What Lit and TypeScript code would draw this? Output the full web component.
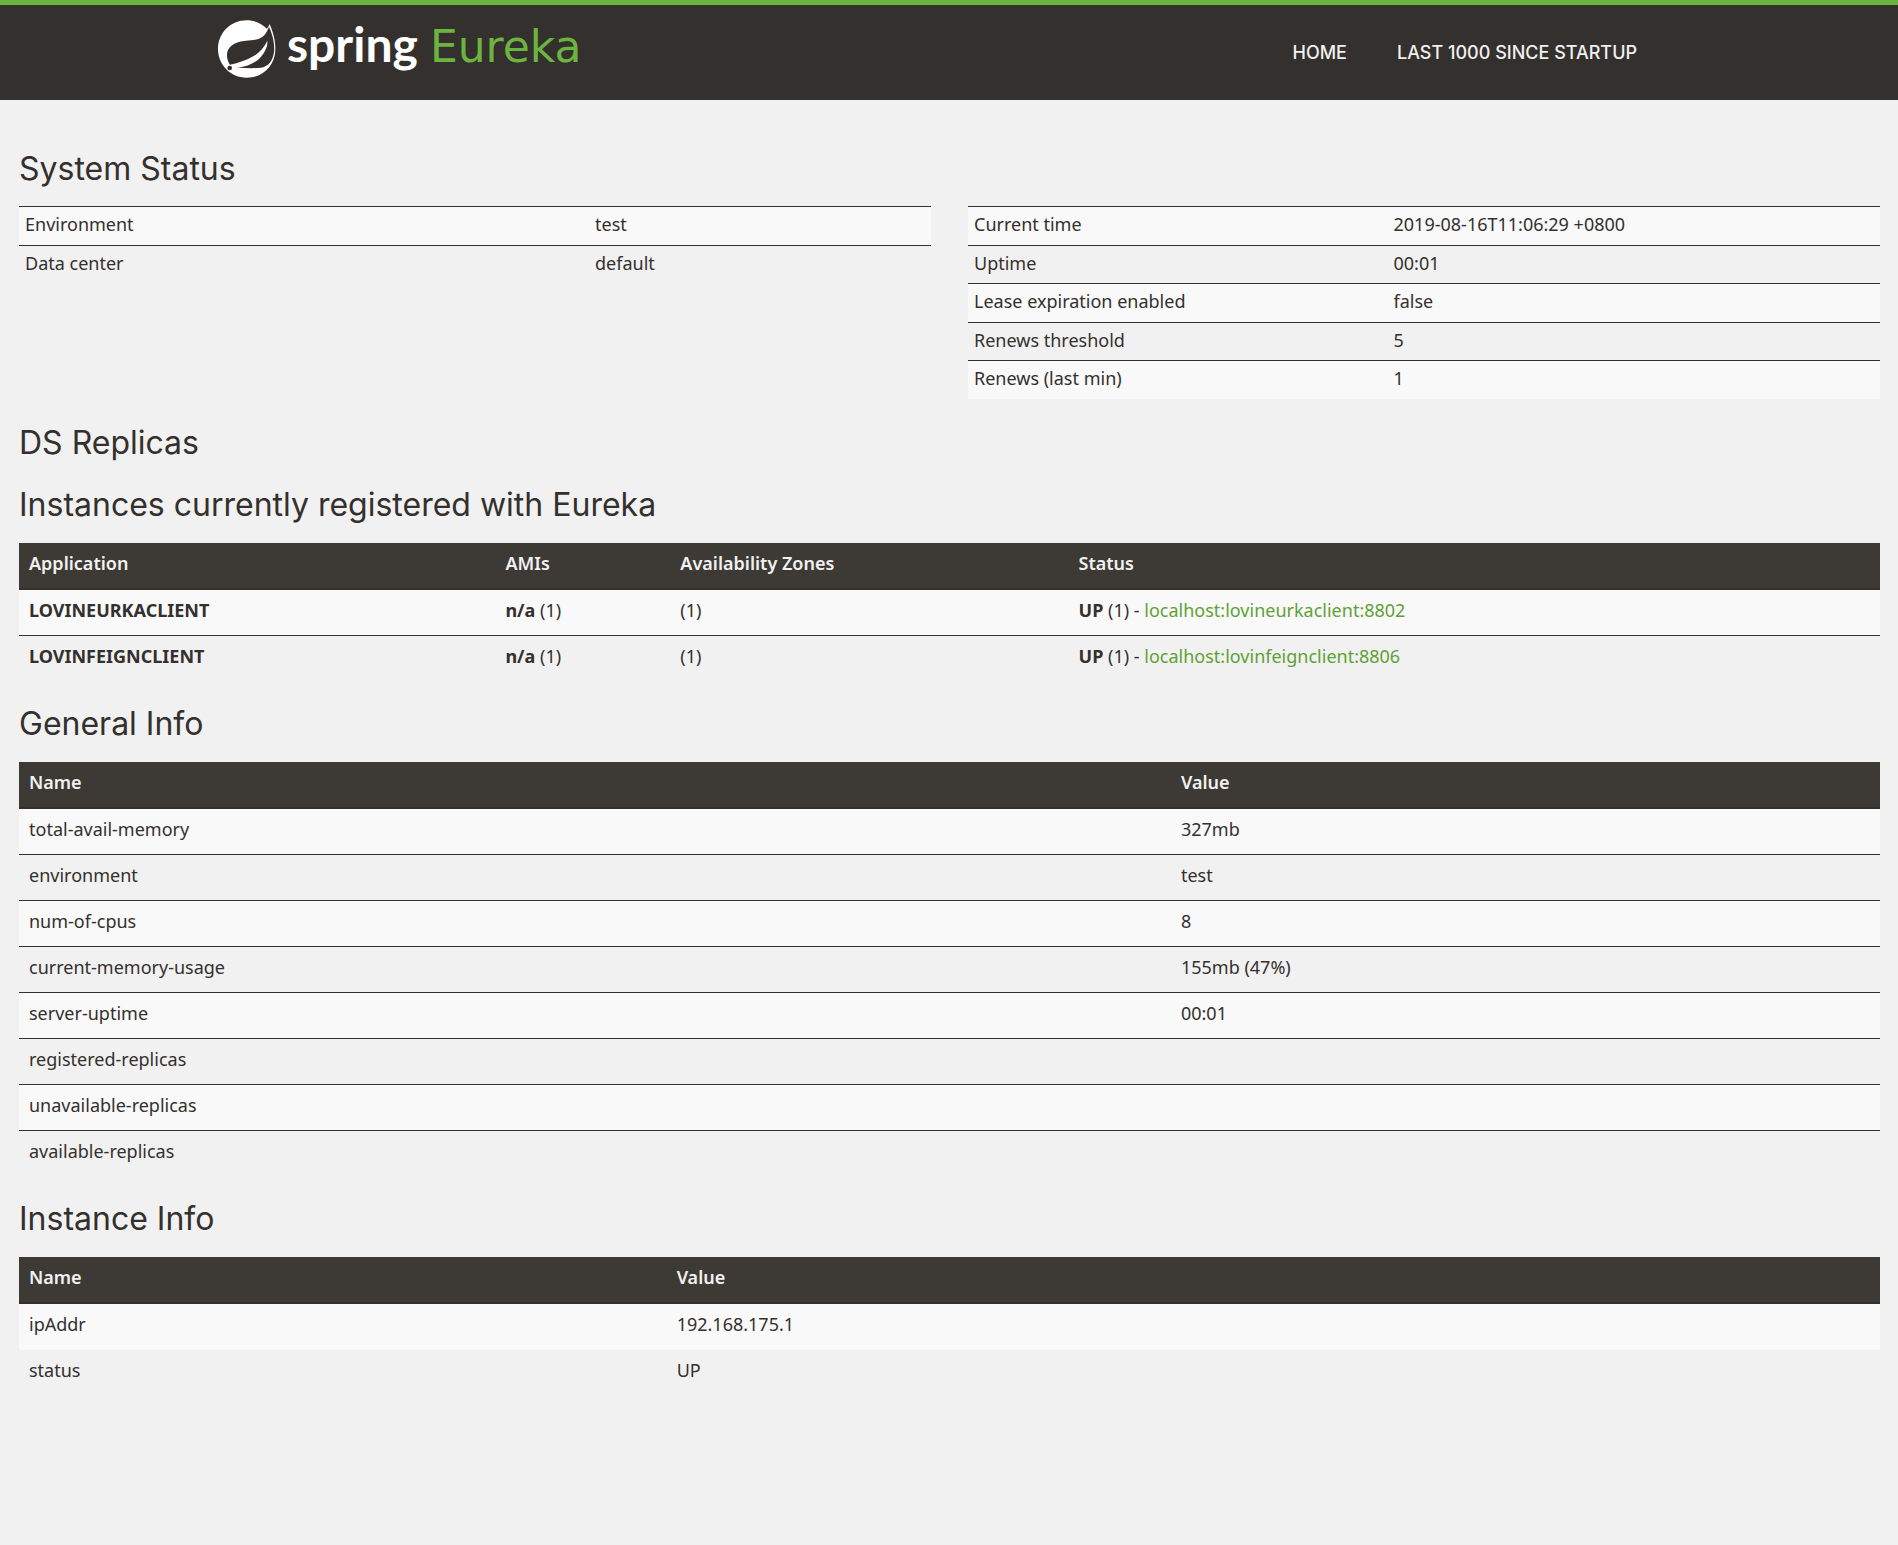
import { LitElement, html, css, svg } from "lit";
import { customElement } from "lit/decorators.js";

const environmentRows = [
  ["Environment", "test"],
  ["Data center", "default"],
];

const statusRows = [
  ["Current time", "2019-08-16T11:06:29 +0800"],
  ["Uptime", "00:01"],
  ["Lease expiration enabled", "false"],
  ["Renews threshold", "5"],
  ["Renews (last min)", "1"],
];

const applications = [
  { name: "LOVINEURKACLIENT", instance: "localhost:lovineurkaclient:8802" },
  { name: "LOVINFEIGNCLIENT", instance: "localhost:lovinfeignclient:8806" },
];

const generalRows = [
  ["total-avail-memory", "327mb"],
  ["environment", "test"],
  ["num-of-cpus", "8"],
  ["current-memory-usage", "155mb (47%)"],
  ["server-uptime", "00:01"],
  ["registered-replicas", ""],
  ["unavailable-replicas", ""],
  ["available-replicas", ""],
];

const instanceRows = [
  ["ipAddr", "192.168.175.1"],
  ["status", "UP"],
];

const leaf = svg`
  <path fill="#fff" d="M104 17C56 17 18 55 18 103s38 86 86 86 85-36 86-84c1-28-7-52-17-77-3 7-5 10-9 14C150 27 129 17 104 17Z"/>
  <path fill="#34302d" d="M171 36c-5 13-10 23-20 31-13 9-30 10-49 11-36 2-58 20-57 44 0 12 4 21 9 28 25-5 49-13 71-26 18-11 31-25 41-46 2 16-6 33-19 48-16 19-41 29-70 33 22 1 47 3 71 0 22-4 34-20 38-46 3-25-4-52-15-77Z"/>
  <circle cx="53" cy="160" r="7" fill="#34302d"/>`;

@customElement("app-root")
export class AppRoot extends LitElement {
  static styles = css`
    :host {
      display: block;
      min-height: 100vh;
      background: #f1f1f1;
      color: #34302d;
      font: 18px/26px "Noto Sans", "Open Sans", sans-serif;
    }
    .header {
      background: #34302d;
      border-top: 5px solid #6db33f;
    }
    .bar {
      display: flex;
      justify-content: space-between;
      align-items: center;
      box-sizing: border-box;
      max-width: 1462px;
      min-height: 95px;
      margin: 0 auto;
    }
    .brand {
      display: flex;
      align-items: baseline;
      color: #fff;
      text-decoration: none;
      line-height: 64px;
      padding-bottom: 14px;
    }
    .mark {
      width: 58px;
      height: 58px;
      align-self: center;
      margin: 6px 11px 0 0;
    }
    .spring {
      font-family: Lato, sans-serif;
      font-weight: 700;
      font-size: 48px;
    }
    .product {
      margin-left: 12px;
      color: #6db33f;
      font-family: "DejaVu Sans", sans-serif;
      font-size: 44px;
    }
    .nav {
      display: flex;
      margin-right: 18px;
    }
    .nav a {
      padding: 0 25px;
      color: #f1f1f1;
      font-family: Inter, sans-serif;
      font-weight: 500;
      text-decoration: none;
      text-transform: uppercase;
    }
    .main {
      padding: 26px 18px 24px 19px;
    }
    .title {
      margin: 24px 0 0;
      font: 400 32px/38px Inter, sans-serif;
    }
    .columns {
      display: grid;
      grid-template-columns: 1fr 1fr;
      gap: 37px;
      align-items: start;
      margin: 18px 0 25px;
    }
    table {
      width: 100%;
      margin-top: 19px;
      border-spacing: 0;
      table-layout: fixed;
    }
    .columns table {
      margin-top: 0;
    }
    th,
    td {
      box-sizing: border-box;
      height: 46px;
      padding: 7px 10px;
      text-align: left;
      vertical-align: top;
    }
    td {
      border-top: 1px solid #34302d;
    }
    thead th {
      height: 47px;
      background: #3d3934;
      border-bottom: 2px solid #34302d;
      color: #f1f1f1;
      font-weight: 600;
    }
    tbody tr:nth-child(odd) {
      background: #f9f9f9;
    }
    thead + tbody tr:first-child td {
      height: 45px;
      border-top: 0;
    }
    .plain td {
      border-top: 0;
    }
    .plain thead + tbody tr:first-child td {
      height: 46px;
    }
    .condensed td {
      height: 38px;
      padding: 4px 6px;
    }
    .condensed tr:nth-child(odd) td {
      height: 39px;
    }
    b {
      font-weight: 700;
    }
    td a {
      color: #5fa134;
      text-decoration: none;
    }
    .w26 { width: 25.6%; }
    .w9 { width: 9.4%; }
    .w21 { width: 21.4%; }
    .w62 { width: 61.9%; }
    .w63 { width: 62.5%; }
    .w46 { width: 46%; }
    .w35 { width: 34.8%; }
  `;

  private rows(rows: string[][]) {
    return rows.map(([name, value]) => html`<tr><td>${name}</td><td>${value}</td></tr>`);
  }

  private condensed(rows: string[][], width: string) {
    return html`
      <table class="condensed">
        <colgroup><col class=${width} /><col /></colgroup>
        <tbody>${this.rows(rows)}</tbody>
      </table>`;
  }

  private nameValue(rows: string[][], width: string, kind = "") {
    return html`
      <table class=${kind}>
        <colgroup><col class=${width} /><col /></colgroup>
        <thead><tr><th>Name</th><th>Value</th></tr></thead>
        <tbody>${this.rows(rows)}</tbody>
      </table>`;
  }

  render() {
    return html`
      <header class="header">
        <div class="bar">
          <a class="brand" href="#">
            <svg class="mark" viewBox="18 16 174 174" aria-hidden="true">${leaf}</svg>
            <span class="spring">spring</span>
            <span class="product">Eureka</span>
          </a>
          <nav class="nav">
            <a href="#">Home</a>
            <a href="#lastn">Last 1000 since startup</a>
          </nav>
        </div>
      </header>
      <main class="main">
        <h1 class="title">System Status</h1>
        <div class="columns">
          ${this.condensed(environmentRows, "w63")}
          ${this.condensed(statusRows, "w46")}
        </div>
        <h1 class="title">DS Replicas</h1>
        <h1 class="title">Instances currently registered with Eureka</h1>
        <table>
          <colgroup><col class="w26" /><col class="w9" /><col class="w21" /><col /></colgroup>
          <thead>
            <tr><th>Application</th><th>AMIs</th><th>Availability Zones</th><th>Status</th></tr>
          </thead>
          <tbody>
            ${applications.map((app) => html`
              <tr>
                <td><b>${app.name}</b></td>
                <td><b>n/a</b> (1)</td>
                <td>(1)</td>
                <td><b>UP</b> (1) - <a href="#">${app.instance}</a></td>
              </tr>`)}
          </tbody>
        </table>
        <h1 class="title">General Info</h1>
        ${this.nameValue(generalRows, "w62")}
        <h1 class="title">Instance Info</h1>
        ${this.nameValue(instanceRows, "w35", "plain")}
      </main>`;
  }
}
